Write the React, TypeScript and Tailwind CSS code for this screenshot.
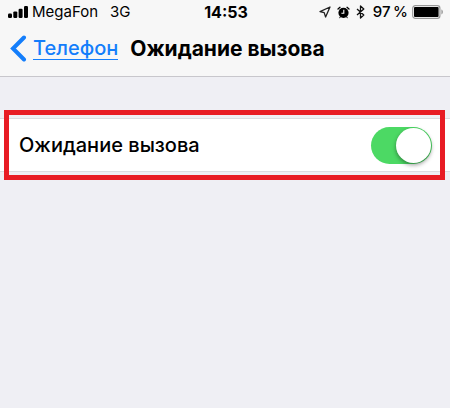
import React, { useState } from 'react';

const SignalIcon = () => (
    <svg width="20" height="12" viewBox="0 0 20 12" fill="#000" aria-hidden="true">
        <rect x="0" y="7.5" width="4" height="4.5" rx="1.2" />
        <rect x="5.3" y="5.4" width="4" height="6.6" rx="1.2" />
        <rect x="10.6" y="2.8" width="4" height="9.2" rx="1.2" />
        <rect x="16" y="0" width="4" height="12" rx="1.2" />
    </svg>
);

const LocationIcon = () => (
    <svg width="12" height="12" viewBox="0 0 12 12" fill="none" stroke="#222" strokeWidth="1.3" strokeLinejoin="round" aria-hidden="true">
        <path d="M11 1 1 5.6 5.2 6.6 6.6 11Z" />
    </svg>
);

const AlarmIcon = () => (
    <svg width="13" height="13" viewBox="0 0 13 13" fill="none" aria-hidden="true">
        <path d="M1 3 3 1.3M12 3 10 1.3" stroke="#000" strokeWidth="1.3" strokeLinecap="round" />
        <circle cx="6.5" cy="6.8" r="5.1" fill="#000" />
        <path d="M3.2 11 2.8 11.8M9.8 11l.4.8" stroke="#000" strokeWidth="1" strokeLinecap="round" />
        <path d="M6.8 3.8v3.4H4.4" stroke="#fff" strokeWidth="1.1" />
    </svg>
);

const BluetoothIcon = () => (
    <svg width="9" height="14" viewBox="0 0 9 14" fill="none" stroke="#111" strokeWidth="1.3" strokeLinejoin="round" aria-hidden="true">
        <path d="M1 4 7.8 10 4.5 13V1L7.8 4 1 10" />
    </svg>
);

const BatteryIcon = () => (
    <svg width="32" height="14" viewBox="0 0 32 14" aria-hidden="true">
        <rect x="0.7" y="0.7" width="27.2" height="12.6" rx="2.6" fill="#fff" stroke="#999" strokeWidth="1.2" />
        <rect x="2" y="2" width="24.6" height="10" rx="1" fill="#000" />
        <path d="M29.4 4.6c2 .6 2 4.2 0 4.8Z" fill="#999" />
    </svg>
);

const StatusBar = () => (
    <div className="grid grid-cols-[1fr_auto_1fr] items-center h-6 pl-2 pr-1.5 text-[15px] leading-6">
        <div className="flex items-center">
            <SignalIcon />
            <span className="ml-1">MegaFon</span>
            <span className="ml-3">3G</span>
        </div>
        <time className="text-base leading-6 font-bold">14:53</time>
        <div className="flex items-center justify-end">
            <LocationIcon />
            <span className="ml-1.5">
                <AlarmIcon />
            </span>
            <span className="ml-1.5">
                <BluetoothIcon />
            </span>
            <span className="ml-2 font-medium whitespace-nowrap">97&#8201;%</span>
            <span className="ml-1">
                <BatteryIcon />
            </span>
        </div>
    </div>
);

const NavBar = () => (
    <nav className="flex items-center h-[52px] pl-2.5 pb-1">
        <a href="#phone" className="flex items-center text-[#147efb]">
            <svg width="17" height="27" viewBox="0 0 17 27" fill="none" aria-hidden="true">
                <path d="M14 2.5 3 13.5l11 11" stroke="currentColor" strokeWidth="4" strokeLinecap="round" />
            </svg>
            <span className="ml-1.5 text-xl leading-[22px] font-medium border-b border-[#147efb]">Телефон</span>
        </a>
        <h1 className="ml-3 pt-0.5 text-[21px] leading-6 font-bold whitespace-nowrap">Ожидание вызова</h1>
    </nav>
);

const App = () => {
    const [enabled, setEnabled] = useState(true);

    return (
        <div className="min-h-screen bg-[#efeff4] text-black font-['Inter','Liberation_Sans',sans-serif]">
            <header className="bg-[#f7f7f7] border-b border-[#c8c7cc]">
                <StatusBar />
                <NavBar />
            </header>

            <main className="pt-[41px]">
                <div className="relative">
                    <label className="flex items-center justify-between h-[54px] pl-[19px] pr-[18px] bg-white border-y border-[#dcdce0] cursor-pointer">
                        <span className="text-xl font-medium">Ожидание вызова</span>
                        <input
                            type="checkbox"
                            role="switch"
                            checked={enabled}
                            onChange={(e) => setEnabled(e.target.checked)}
                            className="appearance-none flex items-center w-[61px] h-[37px] p-px rounded-full bg-[#e5e5ea] checked:bg-[#4cd964] checked:justify-end before:w-[35px] before:h-[35px] before:rounded-full before:bg-white before:shadow-[0_2px_4px_rgba(0,0,0,0.4)] cursor-pointer"
                        />
                    </label>

                    {/* Highlight frame around the setting */}
                    <div className="absolute -top-2 -bottom-2 left-1 right-[5px] border-[5px] border-[#e81c24] pointer-events-none" />
                </div>
            </main>
        </div>
    );
};

export default App;
